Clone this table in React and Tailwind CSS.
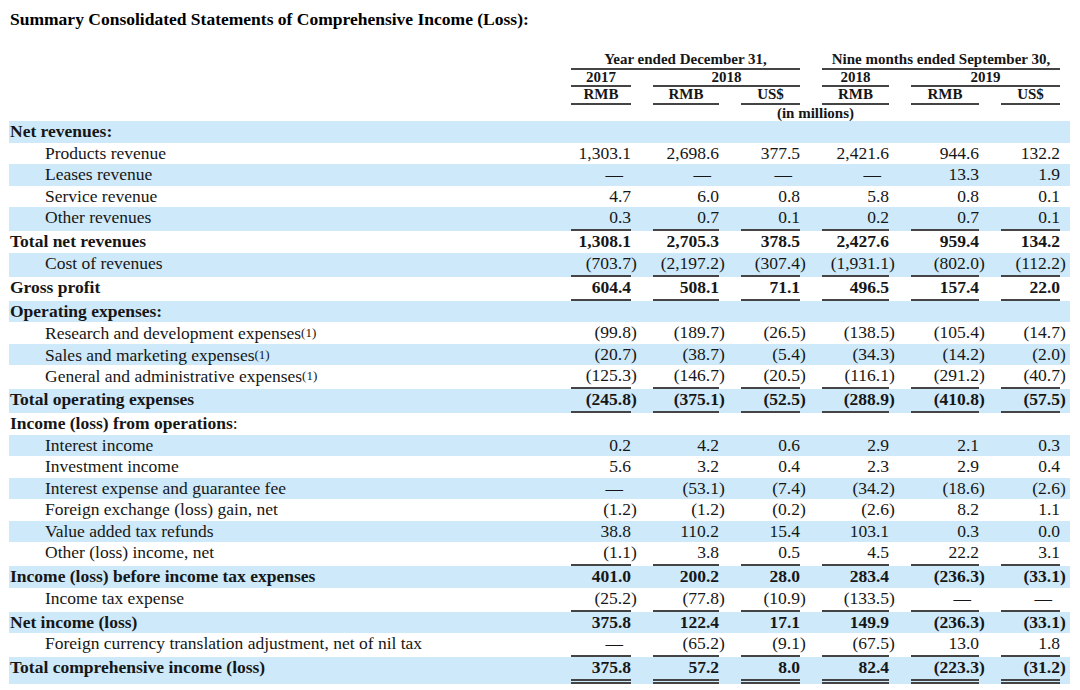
import React from 'react';

const COLS = 'grid grid-cols-[540px_60px_66px_59px_67px_68px_59px] gap-x-[22px]';

const rows = [
  { label: 'Net revenues:', bold: true },
  { label: 'Products revenue', values: ['1,303.1', '2,698.6', '377.5', '2,421.6', '944.6', '132.2'] },
  { label: 'Leases revenue', values: ['—', '—', '—', '—', '13.3', '1.9'] },
  { label: 'Service revenue', values: ['4.7', '6.0', '0.8', '5.8', '0.8', '0.1'] },
  { label: 'Other revenues', values: ['0.3', '0.7', '0.1', '0.2', '0.7', '0.1'], line: true },
  { label: 'Total net revenues', bold: true, values: ['1,308.1', '2,705.3', '378.5', '2,427.6', '959.4', '134.2'] },
  { label: 'Cost of revenues', values: ['(703.7)', '(2,197.2)', '(307.4)', '(1,931.1)', '(802.0)', '(112.2)'], line: true },
  { label: 'Gross profit', bold: true, values: ['604.4', '508.1', '71.1', '496.5', '157.4', '22.0'], line: true },
  { label: 'Operating expenses:', bold: true },
  { label: 'Research and development expenses', note: true, values: ['(99.8)', '(189.7)', '(26.5)', '(138.5)', '(105.4)', '(14.7)'] },
  { label: 'Sales and marketing expenses', note: true, values: ['(20.7)', '(38.7)', '(5.4)', '(34.3)', '(14.2)', '(2.0)'] },
  { label: 'General and administrative expenses', note: true, values: ['(125.3)', '(146.7)', '(20.5)', '(116.1)', '(291.2)', '(40.7)'], line: true },
  { label: 'Total operating expenses', bold: true, values: ['(245.8)', '(375.1)', '(52.5)', '(288.9)', '(410.8)', '(57.5)'], line: true },
  { label: 'Income (loss) from operations', bold: true, colon: true },
  { label: 'Interest income', values: ['0.2', '4.2', '0.6', '2.9', '2.1', '0.3'] },
  { label: 'Investment income', values: ['5.6', '3.2', '0.4', '2.3', '2.9', '0.4'] },
  { label: 'Interest expense and guarantee fee', values: ['—', '(53.1)', '(7.4)', '(34.2)', '(18.6)', '(2.6)'] },
  { label: 'Foreign exchange (loss) gain, net', values: ['(1.2)', '(1.2)', '(0.2)', '(2.6)', '8.2', '1.1'] },
  { label: 'Value added tax refunds', values: ['38.8', '110.2', '15.4', '103.1', '0.3', '0.0'] },
  { label: 'Other (loss) income, net', values: ['(1.1)', '3.8', '0.5', '4.5', '22.2', '3.1'], line: true },
  { label: 'Income (loss) before income tax expenses', bold: true, values: ['401.0', '200.2', '28.0', '283.4', '(236.3)', '(33.1)'] },
  { label: 'Income tax expense', values: ['(25.2)', '(77.8)', '(10.9)', '(133.5)', '—', '—'], line: true },
  { label: 'Net income (loss)', bold: true, values: ['375.8', '122.4', '17.1', '149.9', '(236.3)', '(33.1)'] },
  { label: 'Foreign currency translation adjustment, net of nil tax', values: ['—', '(65.2)', '(9.1)', '(67.5)', '13.0', '1.8'], line: true },
  { label: 'Total comprehensive income (loss)', bold: true, values: ['375.8', '57.2', '8.0', '82.4', '(223.3)', '(31.2)'], double: true },
];

function Num({ value }) {
  if (value === '—') return <span className="mr-[8px]">—</span>;
  const neg = value.startsWith('(');
  return (
    <>
      <span>{neg ? value.slice(0, -1) : value}</span>
      {neg && <span className="w-[6px] -mr-[6px] shrink-0">)</span>}
    </>
  );
}

function Row({ row, index }) {
  const blue = index % 2 === 0;
  const h = row.double ? 'h-[27px]' : row.line ? 'h-[24px]' : 'h-[21.5px]';
  const under = row.double
    ? 'border-b-[5px] border-double border-[#444]'
    : row.line
    ? 'border-b-2 border-[#444]'
    : '';

  return (
    <div className={`${COLS} ${h} pr-[10px] ${blue ? 'bg-[#cde9fa]' : ''}`}>
      <div className={`leading-[21.5px] whitespace-nowrap ${row.bold ? 'font-bold pl-[1px]' : 'pl-[36px]'}`}>
        {row.label}
        {row.note && <span className="text-[13px] align-[2px]">(1)</span>}
        {row.colon && <span className="font-normal">:</span>}
      </div>
      {row.values &&
        row.values.map((v, i) => (
          <div key={i} className={`flex justify-end leading-[21.5px] whitespace-nowrap ${row.bold ? 'font-bold' : ''} ${under}`}>
            <Num value={v} />
          </div>
        ))}
    </div>
  );
}

export default function App() {
  const line = 'h-[17.5px] border-b-2 border-[#444]';
  return (
    <div className="w-[1080px] h-[690px] bg-white text-[#161616] font-['Liberation_Serif',serif] overflow-hidden">
      <div className="h-[52px] pl-[10px] pt-[9px] text-[17.5px] leading-[20px] font-bold text-black">
        Summary Consolidated Statements of Comprehensive Income (Loss):
      </div>

      {/* column headings */}
      <div className={`${COLS} ml-[9px] w-[1061px] pr-[10px] text-[15px] leading-[15.5px] font-bold text-center`}>
        <div className={`col-start-2 col-span-3 ${line}`}>Year ended December 31,</div>
        <div className={`col-span-3 ${line}`}>Nine months ended September 30,</div>
        <div className={`col-start-2 ${line}`}>2017</div>
        <div className={`col-span-2 ${line}`}>2018</div>
        <div className={line}>2018</div>
        <div className={`col-span-2 ${line}`}>2019</div>
        <div className={`col-start-2 ${line}`}>RMB</div>
        <div className={line}>RMB</div>
        <div className={line}>US$</div>
        <div className={line}>RMB</div>
        <div className={line}>RMB</div>
        <div className={line}>US$</div>
        <div className="col-start-2 col-span-6 h-[16.5px] leading-[16.5px]">(in millions)</div>
      </div>

      {/* statement rows */}
      <div className="ml-[9px] w-[1061px] text-[17.5px]">
        {rows.map((row, i) => (
          <Row key={i} row={row} index={i} />
        ))}
      </div>
    </div>
  );
}
